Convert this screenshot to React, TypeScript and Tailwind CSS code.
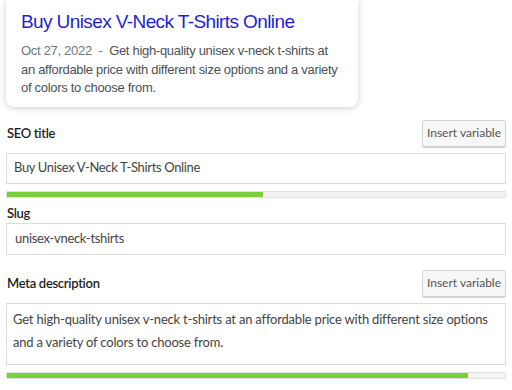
import React from "react";

const ProgressBar = ({ value }: { value: number }) => (
  <div className="h-[7px] w-full border border-[#e2e2e2] bg-[#f3f3f3]">
    <div className="h-full bg-[#7ad03a]" style={{ width: `${value}%` }}></div>
  </div>
);

const InsertButton = () => (
  <button className="h-[27px] w-[84px] rounded-[3px] border border-[#d4d4d4] bg-[#f7f7f7] text-[12px] text-[#555] shadow-[0_1px_0_#cfcfcf]">
    Insert variable
  </button>
);

export default function App() {
  return (
    <div className="w-[512px] h-[390px] bg-white px-[6px] font-['Lato',sans-serif] overflow-hidden">
      {/* Search preview */}
      <div className="w-[352px] bg-white rounded-b-lg shadow-[0_1px_6px_rgba(32,33,36,0.22)] pt-[9px] px-[15px] pb-[9px] font-['Liberation_Sans',Arial,sans-serif]">
        <div className="text-[19px] leading-[26px] tracking-[-0.6px] text-[#1f1fd6]">
          Buy Unisex V-Neck T-Shirts Online
        </div>
        <p className="mt-[7px] text-[13px] leading-[18.5px] tracking-[-0.3px] text-[#4d5156]">
          <span className="text-[#70757a]">Oct 27, 2022&nbsp; - &nbsp;</span>
          Get high-quality unisex v-neck t-shirts at an affordable price with different size options and a variety of colors to choose from.
        </p>
      </div>

      {/* SEO title */}
      <div className="mt-[13px] flex items-end justify-between">
        <label className="text-[13px] font-semibold tracking-[-0.3px] text-[#1e1e1e] mb-[3px] ml-[1px]">SEO title</label>
        <InsertButton />
      </div>
      <div className="mt-[6px] h-[31px] border border-[#dcdcdc] px-[7px] flex items-center text-[13px] tracking-[-0.35px] text-[#444]">
        Buy Unisex V-Neck T-Shirts Online
      </div>
      <div className="mt-[7px]">
        <ProgressBar value={51.4} />
      </div>

      {/* Slug */}
      <div className="mt-[7px] text-[13px] font-semibold tracking-[-0.3px] text-[#1e1e1e] ml-[1px] leading-[16px]">Slug</div>
      <div className="mt-[2px] h-[32px] border border-[#dcdcdc] px-[8px] flex items-center text-[13px] tracking-[-0.3px] text-[#444]">
        unisex-vneck-tshirts
      </div>

      {/* Meta description */}
      <div className="mt-[15px] flex items-end justify-between">
        <label className="text-[13px] font-semibold tracking-[-0.3px] text-[#1e1e1e] mb-[3px] ml-[1px]">Meta description</label>
        <InsertButton />
      </div>
      <div className="mt-[6px] h-[62px] border border-[#dcdcdc] px-[6px] pt-[4px] text-[13px] leading-[23px] tracking-[-0.2px] text-[#444]">
        Get high-quality unisex v-neck t-shirts at an affordable price with different size options and a variety of colors to choose from.
      </div>
      <div className="mt-[7px]">
        <ProgressBar value={92.6} />
      </div>
    </div>
  );
}
